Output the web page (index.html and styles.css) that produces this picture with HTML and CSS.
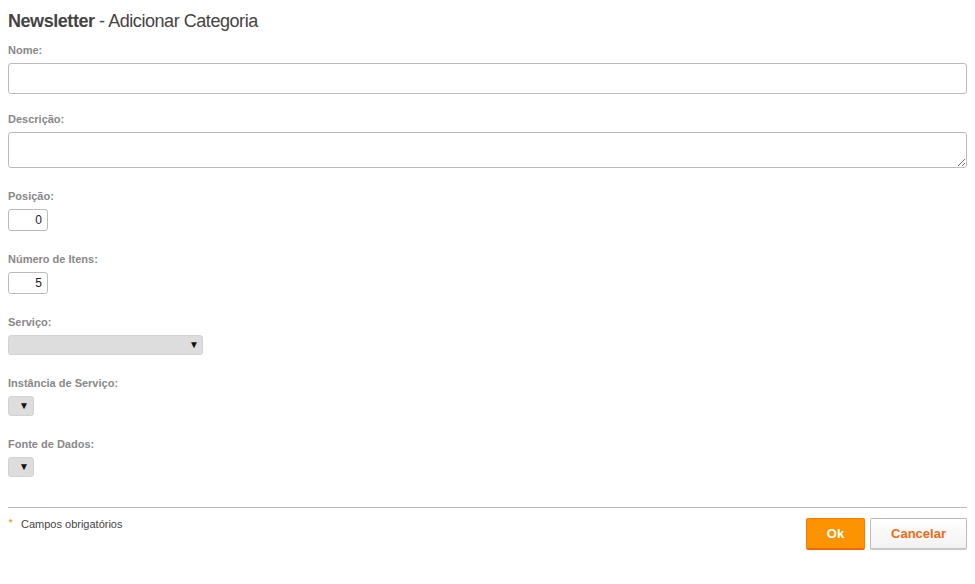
FILE: index.html
```html
<!DOCTYPE html>
<html lang="pt">
<head>
<meta charset="utf-8">
<title>Newsletter - Adicionar Categoria</title>
<link rel="stylesheet" href="styles.css">
</head>
<body>
<div class="page">
  <h1 class="title"><strong>Newsletter</strong> - Adicionar Categoria</h1>
  <form class="form">
    <div class="field field--first">
      <label class="label">Nome:</label>
      <input class="input input--wide" type="text">
    </div>
    <div class="field">
      <label class="label">Descrição:</label>
      <textarea class="textarea"></textarea>
    </div>
    <div class="field">
      <label class="label">Posição:</label>
      <input class="input input--num" type="text" value="0">
    </div>
    <div class="field">
      <label class="label">Número de Itens:</label>
      <input class="input input--num" type="text" value="5">
    </div>
    <div class="field">
      <label class="label">Serviço:</label>
      <div class="select select--wide"><span class="arrow">▼</span></div>
    </div>
    <div class="field">
      <label class="label">Instância de Serviço:</label>
      <div class="select select--small"><span class="arrow">▼</span></div>
    </div>
    <div class="field field--last">
      <label class="label">Fonte de Dados:</label>
      <div class="select select--small"><span class="arrow">▼</span></div>
    </div>
    <div class="footer">
      <div class="note"><span class="star">*</span>Campos obrigatórios</div>
      <div class="actions">
        <button type="button" class="btn btn--ok">Ok</button>
        <button type="button" class="btn btn--cancel">Cancelar</button>
      </div>
    </div>
  </form>
</div>
</body>
</html>
```

FILE: styles.css
```css
* { box-sizing: border-box; }
html, body { margin: 0; padding: 0; background: #fff; }
body { font-family: "Liberation Sans", Arial, sans-serif; color: #444; }
.page { padding: 10px 8px 0 8px; }
.title {
  margin: 0 0 12px 0;
  font-size: 18px;
  line-height: 22px;
  font-weight: normal;
  color: #444;
  letter-spacing: -0.45px;
}
.title strong { font-weight: bold; }
.form { display: flex; flex-direction: column; }
.field { display: flex; flex-direction: column; align-items: flex-start; margin-bottom: 22px; }
.field--first { margin-bottom: 19px; }
.field--last { margin-bottom: 30px; }
.label {
  display: block;
  font-size: 11px;
  line-height: 13px;
  font-weight: bold;
  color: #888;
  margin-bottom: 6px;
}
.input {
  display: block;
  border: 1px solid #bbb;
  border-radius: 3px;
  background: #fff;
  font-family: "Liberation Sans", Arial, sans-serif;
  font-size: 12px;
  color: #222;
  margin: 0;
  outline: none;
}
.input--wide { width: 100%; height: 31px; padding: 0 6px; }
.input--num { width: 40px; height: 22px; text-align: right; padding: 0 5px; }
.textarea {
  display: block;
  width: 100%;
  height: 36px;
  border: 1px solid #bbb;
  border-radius: 3px;
  margin: 0;
  resize: vertical;
  font-family: "Liberation Sans", Arial, sans-serif;
  font-size: 12px;
}
.select {
  display: flex;
  align-items: center;
  justify-content: flex-end;
  height: 20px;
  background: #ddd;
  border: 1px solid #d2d2d2;
  border-radius: 3px;
}
.select--wide { width: 195px; padding-right: 3px; }
.select--small { width: 26px; padding-right: 4px; }
.arrow { font-size: 10px; line-height: 1; color: #111; }
.footer {
  border-top: 1px solid #bbb;
  padding-top: 10px;
  display: flex;
  justify-content: space-between;
  align-items: flex-start;
}
.note { font-size: 11px; line-height: 13px; color: #444; }
.star { color: #f90; font-weight: bold; font-size: 9px; line-height: 9px; display: inline-block; width: 13px; padding-left: 1px; vertical-align: top; }
.actions { display: flex; gap: 5px; }
.btn {
  height: 32px;
  font-family: "Liberation Sans", Arial, sans-serif;
  font-size: 13px;
  font-weight: bold;
  border-radius: 2px;
  margin: 0;
  padding: 0;
  cursor: pointer;
}
.btn--ok {
  width: 59px;
  background: #fb9400;
  color: #fff;
  border: 1px solid #ff7a00;
  border-bottom: 2px solid #f26800;
}
.btn--cancel {
  width: 97px;
  background: linear-gradient(#fff, #f2f2f2);
  color: #f26a10;
  border: 1px solid #bbb;
  border-bottom: 2px solid #c6c6c6;
}
```
